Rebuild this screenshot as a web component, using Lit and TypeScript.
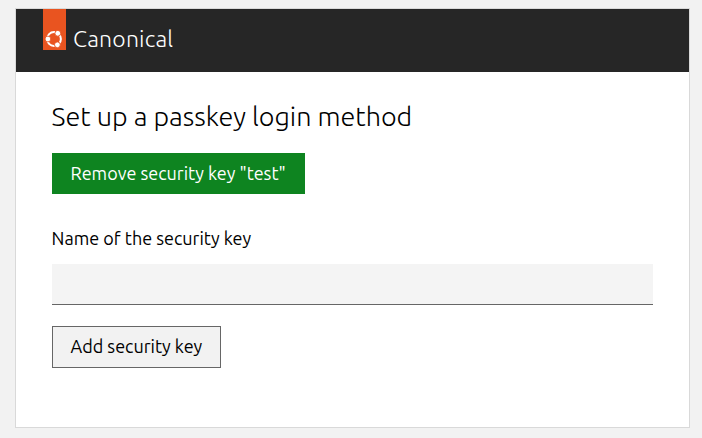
import { LitElement, html, css, svg } from "lit";
import { customElement, state } from "lit/decorators.js";

const circleOfFriends = svg`
  <circle cx="10" cy="10" r="6.9" fill="none" stroke="#fff" stroke-width="2"></circle>
  <g fill="#fff" stroke="#e95420" stroke-width="0.9">
    <circle cx="3.9" cy="10" r="2.9"></circle>
    <circle cx="13.8" cy="4.3" r="2.9"></circle>
    <circle cx="13.4" cy="15.8" r="2.9"></circle>
  </g>`;

@customElement("app-root")
export class AppRoot extends LitElement {
  static styles = css`
    :host {
      display: block;
      box-sizing: border-box;
      height: 438px;
      padding: 8px 12px 10px 15px;
      background: #f2f2f2;
      color: #000;
      font: 18px/24px "Ubuntu", "Noto Sans", sans-serif;
      overflow: hidden;
    }
    * { box-sizing: border-box; }
    .card {
      width: 675px;
      height: 420px;
      border: 1px solid #d9d9d9;
      background: #fff;
    }
    .header {
      display: flex;
      height: 63px;
      padding-left: 27px;
      background: #262626;
      color: #fff;
    }
    .tag {
      display: flex;
      align-items: flex-end;
      width: 23px;
      height: 41px;
      padding: 0 0 1px 1px;
      background: #e95420;
    }
    .tag svg { display: block; width: 20px; height: 20px; }
    .brand {
      margin: 14px 0 0 7px;
      font-size: 23px;
      font-weight: 300;
      line-height: 32px;
      letter-spacing: 0.2px;
      white-space: nowrap;
    }
    .body { padding: 26px 36px 0; }
    h1 {
      margin: 0 0 19px -0.4px;
      font-size: 27px;
      font-weight: 300;
      line-height: 36px;
      letter-spacing: -0.03px;
      white-space: nowrap;
    }
    button, input {
      display: block;
      margin: 0;
      border-radius: 0;
      font: inherit;
      color: inherit;
    }
    button { padding: 0 0 1px 17.5px; text-align: left; white-space: nowrap; }
    .remove {
      width: 253px;
      height: 41px;
      border: 1px solid #0e8420;
      background: #0e8420;
      color: #fff;
    }
    label { display: block; margin: 32px 0 14px -0.4px; }
    input {
      width: 601px;
      height: 41px;
      padding: 0 9px;
      border: 0;
      border-bottom: 1px solid #666;
      background: #f4f4f4;
      outline: 0;
    }
    .add {
      width: 169px;
      height: 42px;
      margin-top: 21px;
      padding-bottom: 2px;
      border: 1px solid #666;
      background: #f2f2f2;
    }
  `;

  @state() private keyName = "";

  render() {
    return html`
      <main class="card">
        <header class="header">
          <div class="tag"><svg viewBox="0 0 20 20" aria-hidden="true">${circleOfFriends}</svg></div>
          <span class="brand">Canonical</span>
        </header>
        <section class="body">
          <h1>Set up a passkey login method</h1>
          <button class="remove" type="button">Remove security key "test"</button>
          <label for="key-name">Name of the security key</label>
          <input id="key-name" type="text" .value=${this.keyName}
            @input=${(e: Event) => (this.keyName = (e.target as HTMLInputElement).value)} />
          <button class="add" type="button">Add security key</button>
        </section>
      </main>`;
  }
}
